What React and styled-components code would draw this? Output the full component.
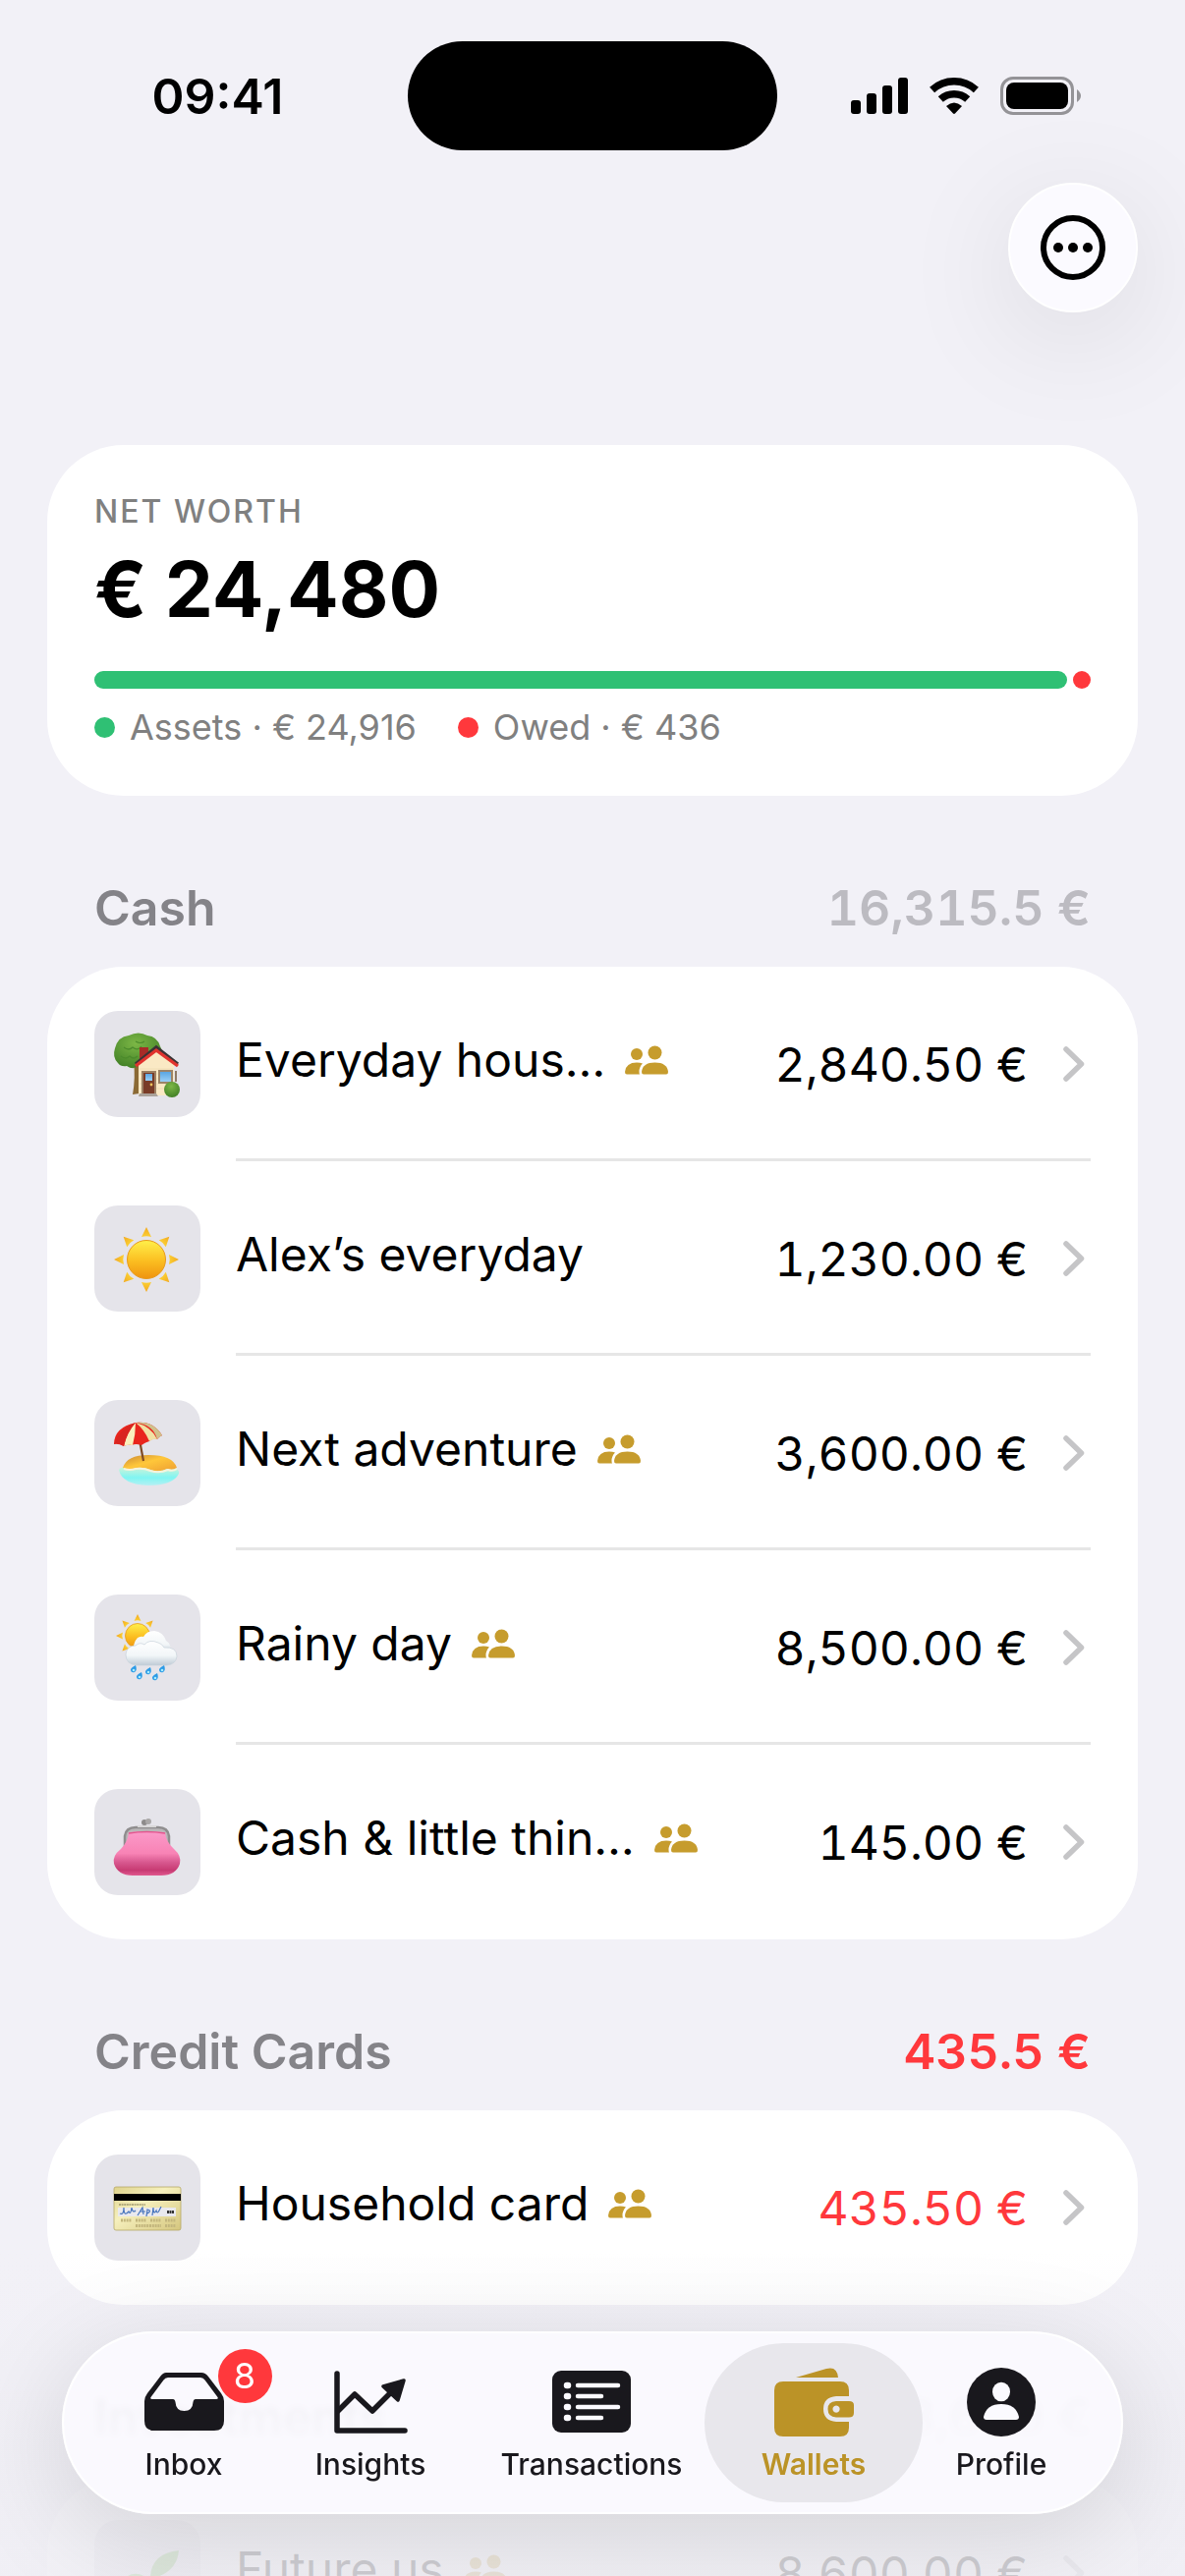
import React from 'react'
import { styled, createGlobalStyle } from 'styled-components'

const GlobalStyle = createGlobalStyle`
  *, *::before, *::after { box-sizing: border-box; }
  body {
    margin: 0;
    background: #f2f1f7;
    color: #000;
    font-family: Inter, "Liberation Sans", sans-serif;
  }
  h1, h2, p, ul { margin: 0; padding: 0; }
  ul { list-style: none; }
  a { color: inherit; text-decoration: none; }
  svg { display: block; flex: none; }
`

/* ---------- data ---------- */

const sections = [
  {
    title: "Cash",
    total: "16,315.5 €",
    wallets: [
      { icon: "house", name: "Everyday hous…", amount: "2,840.50 €", shared: true },
      { icon: "sun", name: "Alex’s everyday", amount: "1,230.00 €" },
      { icon: "beach", name: "Next adventure", amount: "3,600.00 €", shared: true },
      { icon: "rain", name: "Rainy day", amount: "8,500.00 €", shared: true },
      { icon: "purse", name: "Cash & little thin…", amount: "145.00 €", shared: true }
    ]
  },
  {
    title: "Credit Cards",
    total: "435.5 €",
    debt: true,
    wallets: [
      { icon: "card", name: "Household card", amount: "435.50 €", shared: true }
    ]
  },
  {
    title: "Investments",
    total: "8,600 €",
    wallets: [
      { icon: "plant", name: "Future us", amount: "8,600.00 €", shared: true }
    ]
  }
]

/* ---------- wallet pictures ---------- */

const House = () => (
  <svg viewBox="0 0 108 108" width="108" height="108" aria-hidden="true">
    <defs>
      <radialGradient id="leaf" cx="45%" cy="30%" r="75%">
        <stop offset="0" stopColor="#7cb746" />
        <stop offset="1" stopColor="#3e7d24" />
      </radialGradient>
      <linearGradient id="pane" x1="0" y1="0" x2="0" y2="1">
        <stop offset="0" stopColor="#5aa5e2" />
        <stop offset="1" stopColor="#9bd0f6" />
      </linearGradient>
    </defs>
    <path d="M40 52 L48 52 L46 84 L39 85 Q42 68 40 52Z" fill="#8b6a35" />
    <path d="M24 53 Q18 47 21 38 Q24 26 35 25 Q45 20 54 25 Q64 26 67 36 Q71 42 66 50 Q58 59 46 55 Q40 61 33 56 Q27 57 24 53Z" fill="url(#leaf)" />
    <path d="M30 37 q5 4 9 0 q5 4 9 -1 M27 46 q5 4 9 0 q4 4 8 0 M42 31 q5 3 9 0" fill="none" stroke="#4c8b2c" strokeWidth="1.2" />
    <path d="M46 37 h9 v8 l-9 8z" fill="#a82c27" />
    <path d="M45 54 L63 39 L81 54 V86 H45Z" fill="#fae9c4" />
    <path d="M46 59H80M46 64H80M46 69H80M46 74H80M46 79H80" stroke="#eedbb3" strokeWidth="0.8" />
    <path d="M42 54 L63 37 L85 54" fill="none" stroke="#3b3334" strokeWidth="3.4" />
    <path d="M42 56 L63 40 L85 56" fill="none" stroke="#e1332e" strokeWidth="3.4" />
    <rect x="48" y="61" width="15" height="25" fill="#9c8063" />
    <rect x="50" y="63" width="11" height="22" fill="#793c27" />
    <rect x="52" y="64" width="7" height="7" fill="url(#pane)" />
    <circle cx="58" cy="75" r="1.4" fill="#eec25b" />
    <rect x="65" y="60" width="15" height="14" fill="#9c8468" />
    <rect x="67" y="62" width="11" height="10" fill="url(#pane)" />
    <path d="M83 61v11" stroke="#8e7b67" strokeWidth="2" />
    <path d="M46 84 h17 l2 3 H45z" fill="#aaa29a" />
    <circle cx="79" cy="80" r="8" fill="url(#leaf)" />
  </svg>
)

const SunRays = ({ cx, cy, inner, outer, half, skip = [] }) => (
  <g fill="url(#ray)">
    {[0, 45, 90, 135, 180, 225, 270, 315]
      .filter((angle) => !skip.includes(angle))
      .map((angle) => (
        <path
          key={angle}
          d={`M${cx} ${cy - outer} L${cx + half} ${cy - inner} Q${cx} ${cy - inner - 1.5} ${cx - half} ${cy - inner}Z`}
          transform={`rotate(${angle} ${cx} ${cy})`}
        />
      ))}
  </g>
)

const SunDefs = () => (
  <defs>
    <linearGradient id="ray" x1="0" y1="0" x2="0" y2="1">
      <stop offset="0" stopColor="#f2a81f" />
      <stop offset="1" stopColor="#fbcf34" />
    </linearGradient>
    <linearGradient id="disc" x1="0" y1="0" x2="0" y2="1">
      <stop offset="0" stopColor="#fff04a" />
      <stop offset="0.55" stopColor="#fbbd20" />
      <stop offset="1" stopColor="#ef9410" />
    </linearGradient>
  </defs>
)

const Sun = () => (
  <svg viewBox="0 0 108 108" width="108" height="108" aria-hidden="true">
    <SunDefs />
    <SunRays cx={53} cy={55} inner={23} outer={33} half={5} />
    <circle cx="53" cy="55" r="19.5" fill="url(#disc)" stroke="#e89a1c" strokeWidth="1" />
  </svg>
)

const Beach = () => (
  <svg viewBox="0 0 108 108" width="108" height="108" aria-hidden="true">
    <defs>
      <linearGradient id="sea" x1="0" y1="0" x2="0" y2="1">
        <stop offset="0" stopColor="#d9f3d4" />
        <stop offset="0.6" stopColor="#7ff5f2" />
        <stop offset="1" stopColor="#b5f0f3" />
      </linearGradient>
      <linearGradient id="sand" x1="0" y1="0" x2="1" y2="1">
        <stop offset="0" stopColor="#c98735" />
        <stop offset="0.45" stopColor="#ffc73a" />
        <stop offset="1" stopColor="#ee9f33" />
      </linearGradient>
    </defs>
    <path d="M25 71 Q28 67 36 67 H78 Q87 70 86 75 Q80 87 55 87 Q28 86 25 71Z" fill="url(#sea)" />
    <path d="M29 69 Q33 56 55 56 Q80 56 84 69 Q80 72 74 70 Q66 74 57 71 Q48 67 40 70 Q34 71 29 69Z" fill="url(#sand)" />
    <path d="M30 70 Q36 72 42 70 Q50 69 57 72 Q66 75 75 71 Q80 73 84 70" fill="none" stroke="#f6f3dd" strokeWidth="2" />
    <path d="M43 25 L50 62" stroke="#7f4a24" strokeWidth="2.2" />
    <path d="M20 45 Q20 28 42 23 Q60 21 69 36 Q66 37 64 40 Q60 38 56 42 Q52 43 48 46 Q42 44 38 46 Q34 45 30 47 Q24 44 20 45Z" fill="#e9251d" />
    <path d="M42 23 Q33 33 30 47 Q34 45 39 46 Q42 35 42 23Z" fill="#faf0bd" />
    <path d="M42 23 Q51 30 56 42 Q60 39 64 40 Q58 27 42 23Z" fill="#f1e1a4" />
    <path d="M42 23 Q26 29 20 45 Q24 43 30 47 Q33 33 42 23Z" fill="#d92620" />
    <path d="M42 23 Q60 25 64 40 Q66 37 69 36 Q60 21 42 23Z" fill="#cfc28c" />
  </svg>
)

const Rain = () => (
  <svg viewBox="0 0 108 108" width="108" height="108" aria-hidden="true">
    <SunDefs />
    <defs>
      <linearGradient id="cloud" x1="0" y1="0" x2="0" y2="1">
        <stop offset="0" stopColor="#ffffff" />
        <stop offset="0.6" stopColor="#f2f6f8" />
        <stop offset="1" stopColor="#bfcbd6" />
      </linearGradient>
    </defs>
    <SunRays cx={44} cy={42} inner={15} outer={22} half={3.5} skip={[90, 135, 180]} />
    <circle cx="44" cy="42" r="12.5" fill="url(#disc)" stroke="#e89a1c" strokeWidth="0.8" />
    <path d="M41 60 Q38 50 44 44 Q48 42 50 43 Q53 37 61 37 Q70 38 73 47 Q79 50 77 60Z" fill="url(#cloud)" />
    <path d="M43 72 Q32 71 32 61 Q33 52 42 52 Q46 48 51 51 Q56 45 65 49 Q69 50 71 54 Q84 53 84 63 Q83 71 74 72Z" fill="url(#cloud)" stroke="#c9d3db" strokeWidth="0.7" />
    {[[40, 76], [55, 78], [69, 76], [46, 83], [62, 84]].map(([x, y]) => (
      <g key={x}>
        <path d={`M${x + 2} ${y - 4} Q${x + 4} ${y + 1} ${x + 1} ${y + 3} Q${x - 3} ${y + 4} ${x - 3} ${y} Q${x - 2} ${y - 2} ${x + 2} ${y - 4}Z`} fill="#2c9be6" />
        <circle cx={x} cy={y + 1} r="1.3" fill="#a6ecff" />
      </g>
    ))}
  </svg>
)

const Purse = () => (
  <svg viewBox="0 0 108 108" width="108" height="108" aria-hidden="true">
    <defs>
      <linearGradient id="pink" x1="0" y1="0" x2="0" y2="1">
        <stop offset="0" stopColor="#fb9ac9" />
        <stop offset="0.5" stopColor="#f883b5" />
        <stop offset="0.7" stopColor="#d8588f" />
        <stop offset="0.88" stopColor="#c73a73" />
        <stop offset="1" stopColor="#e0598f" />
      </linearGradient>
    </defs>
    <circle cx="51" cy="34" r="3" fill="#8d8b8b" />
    <circle cx="55" cy="33" r="3" fill="#a9a7a7" />
    <path d="M31 60 V48 Q32 39 42 39 H65 Q75 39 76 48 V60" fill="#b9b7b8" stroke="#8f8d8e" strokeWidth="2.5" />
    <path d="M44 38 h19" stroke="#d8d7d8" strokeWidth="2" />
    <path d="M35 44 Q53 42 72 44 Q73 54 81 61 Q89 68 87 76 Q83 88 68 88 H39 Q24 88 20 76 Q18 68 27 61 Q34 54 35 44Z" fill="url(#pink)" />
    <path d="M35 45 Q53 42 72 45" fill="none" stroke="#e2568e" strokeWidth="1.5" />
  </svg>
)

const CreditCard = () => (
  <svg viewBox="0 0 108 108" width="108" height="108" aria-hidden="true">
    <defs>
      <linearGradient id="gold" x1="0" y1="0" x2="1" y2="1">
        <stop offset="0" stopColor="#ded28c" />
        <stop offset="0.4" stopColor="#f6f0bd" />
        <stop offset="1" stopColor="#d5c67e" />
      </linearGradient>
    </defs>
    <rect x="20" y="33" width="68" height="44" rx="2" fill="url(#gold)" stroke="#b5a768" strokeWidth="0.8" />
    <rect x="20" y="40" width="68" height="7" fill="#000" />
    <rect x="24" y="54" width="59" height="9" fill="#e9e9ee" />
    <path d="M25 51 h27" stroke="#77704a" strokeWidth="1.2" strokeDasharray="2 0.6" />
    <path d="M26 60 q4 2 4 -6 q0 10 5 4 q2 4 3 -4 q1 6 4 3 M44 62 l5 -8 l1 7 m-4 -3 h6 m1 5 l1 -7 q5 1 0 4 m5 2 l1 -8 q0 8 3 3 q1 4 3 0 l2 -4" fill="none" stroke="#4674bd" strokeWidth="1.2" />
    <path d="M74 58.5 h7" stroke="#333" strokeWidth="3" strokeDasharray="2 0.5" />
    <path d="M27 67 h11 m4 0 h11 m4 0 h11 m4 0 h11 M42 72.5 h26 m4 0 h11" stroke="#c3b67d" strokeWidth="3" strokeDasharray="2 0.8" />
  </svg>
)

const Plant = () => (
  <svg viewBox="0 0 108 108" width="108" height="108" aria-hidden="true">
    <path d="M54 90 Q58 72 56 60" fill="none" stroke="#58a338" strokeWidth="4" />
    <path d="M57 60 Q57 34 86 31 Q84 54 57 60Z" fill="#65b53e" />
    <path d="M57 62 Q38 44 22 70 Q42 80 57 62Z" fill="#76c54b" />
  </svg>
)

const pictures = {
  house: House,
  sun: Sun,
  beach: Beach,
  rain: Rain,
  purse: Purse,
  card: CreditCard,
  plant: Plant
}

/* ---------- glyphs ---------- */

const SignalIcon = () => (
  <svg viewBox="0 0 58 37" width="58" height="37" aria-hidden="true">
    <rect x="0" y="23" width="10" height="14" rx="3" />
    <rect x="16" y="16" width="10" height="21" rx="3" />
    <rect x="32" y="8" width="10" height="29" rx="3" />
    <rect x="48" y="0" width="10" height="37" rx="3" />
  </svg>
)

const WifiIcon = () => (
  <svg viewBox="0 0 50 37" width="50" height="37" aria-hidden="true">
    <path d="M2.6 12.5 A33.2 33.2 0 0 1 47.4 12.5" fill="none" stroke="#000" strokeWidth="7.5" />
    <path d="M11.3 22 A20.3 20.3 0 0 1 38.7 22" fill="none" stroke="#000" strokeWidth="7.5" />
    <path d="M17 29 Q25 22 33 29 L26 36.5 Q25 37.4 24 36.5Z" />
  </svg>
)

const BatteryIcon = () => (
  <svg viewBox="0 0 83 40" width="83" height="40" aria-hidden="true">
    <rect x="1.5" y="1.5" width="72" height="36" rx="11.5" fill="none" stroke="#949397" strokeWidth="3" />
    <rect x="6" y="6" width="63" height="27" rx="8" />
    <path d="M78 13 Q82 16 82 19.5 Q82 23 78 26Z" fill="#949397" />
  </svg>
)

const MoreIcon = () => (
  <svg viewBox="0 0 66 66" width="66" height="66" aria-hidden="true">
    <circle cx="33" cy="33" r="30" fill="none" stroke="#000" strokeWidth="6" />
    <circle cx="18" cy="33" r="5" />
    <circle cx="33" cy="33" r="5" />
    <circle cx="48" cy="33" r="5" />
  </svg>
)

const PeopleIcon = () => (
  <svg viewBox="0 0 44 30" width="44" height="30" fill="#c69c2d" aria-label="Shared" role="img">
    <circle cx="12" cy="9" r="6" />
    <circle cx="30.5" cy="7.5" r="7" />
    <path d="M0 27 Q1 17.5 12 17.5 Q15.5 17.5 18 18.6 Q14.5 22 14.5 27 Q14.5 28.5 15 29.5 H2 Q0 29.5 0 27Z" />
    <path d="M17 27 Q18 17.5 30.5 17.5 Q43 17.5 44 27 Q44 29.5 42 29.5 H19 Q17 29.5 17 27Z" />
  </svg>
)

const Chevron = () => (
  <svg viewBox="0 0 22 36" width="22" height="36" aria-hidden="true">
    <path d="M3 3 L18.5 18 L3 33" fill="none" stroke="#c5c5c7" strokeWidth="5.5" strokeLinecap="round" strokeLinejoin="round" />
  </svg>
)

const InboxIcon = () => (
  <svg viewBox="0 0 81 60" width="81" height="60" fill="currentColor" aria-hidden="true">
    <path fillRule="evenodd" d="M22 0 H58 Q62 0 65 4 L78 21 Q81 25 81 29 V49 Q81 59 71 59 H10 Q0 59 0 49 V29 Q0 25 3 21 L16 4 Q19 0 22 0Z M24 5 Q21 5 19.5 7.5 L6.5 25 Q5.5 27 8 27 H29 Q31 27 31.5 30 Q32 39 40.5 39 Q49 39 49.5 30 Q50 27 52 27 H73 Q75.5 27 74.5 25 L61.5 7.5 Q60 5 57 5Z" />
  </svg>
)

const InsightsIcon = () => (
  <svg viewBox="0 0 75 64" width="75" height="64" fill="none" stroke="currentColor" strokeWidth="5.5" strokeLinecap="round" strokeLinejoin="round" aria-hidden="true">
    <path d="M3 3 V61 H72" />
    <path d="M4 41 L21 24 L39 41 L60 20" />
    <path d="M71 10 L50 16 L65 30Z" fill="currentColor" strokeWidth="3.5" />
  </svg>
)

const TransactionsIcon = () => (
  <svg viewBox="0 0 80 64" width="80" height="64" aria-hidden="true">
    <rect width="80" height="63" rx="9" fill="currentColor" />
    <g stroke="#fbfaff" strokeWidth="4.5" strokeLinecap="round">
      <path d="M26 15 H67 M26 26 H50 M26 37 H67 M26 48 H50" />
      <path d="M15 15 h1 M15 26 h1 M15 37 h1 M15 48 h1" strokeWidth="6.5" />
    </g>
  </svg>
)

const WalletIcon = () => (
  <svg viewBox="0 0 81 70" width="81" height="70" fill="currentColor" aria-hidden="true">
    <path d="M22 10 L53 1 Q64 -2 65 10Z" />
    <path d="M9 14 H67 Q76 14 76 23 V29 H63 Q50 30 50 42 Q50 54 63 55 H76 V61 Q76 70 67 70 H9 Q0 70 0 61 V23 Q0 14 9 14Z" />
    <path fillRule="evenodd" d="M63 34 H76 Q81 34 81 38 V46 Q81 50.5 76 50.5 H63 Q54.5 50 54.5 42 Q54.5 34.5 63 34Z M63 38.5 a3.6 3.6 0 1 0 0.1 0Z" />
  </svg>
)

const ProfileIcon = () => (
  <svg viewBox="0 0 70 70" width="70" height="70" aria-hidden="true">
    <circle cx="35" cy="35" r="35" fill="currentColor" />
    <ellipse cx="35" cy="24.5" rx="9" ry="9.8" fill="#fbfaff" />
    <path d="M17 50 Q20 37 35 37 Q50 37 53 50 Q53 53 50 53 H20 Q17 53 17 50Z" fill="#fbfaff" />
  </svg>
)

const tabs = [
  { label: "Inbox", Icon: InboxIcon, badge: 8 },
  { label: "Insights", Icon: InsightsIcon },
  { label: "Transactions", Icon: TransactionsIcon },
  { label: "Wallets", Icon: WalletIcon, active: true },
  { label: "Profile", Icon: ProfileIcon }
]

export default function WalletsPage() {
  return (
    <Screen>
      <GlobalStyle />
      <StatusBar>
        <Clock>09:41</Clock>
        <Island />
        <StatusIcons>
          <SignalIcon />
          <WifiIcon />
          <BatteryIcon />
        </StatusIcons>
      </StatusBar>

      <Toolbar>
        <MoreButton type="button" aria-label="More">
          <MoreIcon />
        </MoreButton>
      </Toolbar>

      <Content>
        <NetWorthCard>
          <NetWorthLabel>NET WORTH</NetWorthLabel>
          <NetWorthAmount>€ 24,480</NetWorthAmount>
          <Bar>
            <BarPart $grow={24916 - 436} $color="#2fc074" />
            <BarPart $grow={436} $color="#ff383c" />
          </Bar>
          <Legend>
            <LegendItem><Dot $color="#2fc074" />Assets · € 24,916</LegendItem>
            <LegendItem><Dot $color="#ff383c" />Owed · € 436</LegendItem>
          </Legend>
        </NetWorthCard>

        {sections.map((section) => (
          <section key={section.title}>
            <SectionHeader>
              <SectionTitle>{section.title}</SectionTitle>
              <SectionTotal $debt={section.debt}>{section.total}</SectionTotal>
            </SectionHeader>
            <WalletList>
              {section.wallets.map((wallet) => {
                const Picture = pictures[wallet.icon]
                return (
                  <li key={wallet.name}>
                    <WalletRow href="#">
                      <Tile><Picture /></Tile>
                      <RowBody>
                        <WalletName>
                          {wallet.name}
                          {wallet.shared && <PeopleIcon />}
                        </WalletName>
                        <Amount $debt={section.debt}>{wallet.amount}</Amount>
                        <Chevron />
                      </RowBody>
                    </WalletRow>
                  </li>
                )
              })}
            </WalletList>
          </section>
        ))}
      </Content>

      <BottomFade />
      <TabBar>
        {tabs.map(({ label, Icon, badge, active }) => (
          <Tab key={label} href="#" $active={active} aria-current={active ? "page" : undefined}>
            <IconSlot>
              <Icon />
              {badge && <Badge>{badge}</Badge>}
            </IconSlot>
            {label}
          </Tab>
        ))}
      </TabBar>
    </Screen>
  )
}

/* ---------- styles ---------- */

const Screen = styled.main`
  position: relative;
  height: 100vh;
  overflow: hidden;
`;

const StatusBar = styled.header`
  display: grid;
  grid-template-columns: 1fr 376px 1fr;
  align-items: center;
  padding-top: 42px;
`;

const Clock = styled.span`
  padding-left: 28px;
  text-align: center;
  font-size: 50px;
  line-height: 60px;
  font-weight: 600;
`;

const Island = styled.div`
  height: 111px;
  border-radius: 56px;
  background: #000;
`;

const StatusIcons = styled.div`
  display: flex;
  justify-content: center;
  align-items: center;
  gap: 22px;
  padding-right: 31px;
`;

const Toolbar = styled.div`
  display: flex;
  justify-content: flex-end;
  padding: 33px 48px 0;
`;

const MoreButton = styled.button`
  display: flex;
  align-items: center;
  justify-content: center;
  width: 132px;
  height: 132px;
  padding: 0;
  border: 2px solid #fff;
  border-radius: 50%;
  background: #fbfaff;
  box-shadow: 0 24px 120px rgba(0, 0, 0, 0.1);
`;

const Content = styled.div`
  padding: 135px 48px 0;
`;

const NetWorthCard = styled.section`
  padding: 50px 48px 48px;
  border-radius: 78px;
  background: #fff;
`;

const NetWorthLabel = styled.h2`
  color: #808080;
  font-size: 32px;
  line-height: 36px;
  font-weight: 500;
  letter-spacing: 2px;
`;

const NetWorthAmount = styled.p`
  margin-top: 16px;
  font-size: 78px;
  line-height: 90px;
  font-weight: 700;
`;

const Bar = styled.div`
  display: flex;
  gap: 6px;
  margin-top: 38px;
`;

const BarPart = styled.div`
  flex: ${({ $grow }) => $grow} 1 0;
  height: 18px;
  border-radius: 9px;
  background: ${({ $color }) => $color};
`;

const Legend = styled.div`
  display: flex;
  gap: 42px;
  margin-top: 17px;
`;

const LegendItem = styled.span`
  display: flex;
  align-items: center;
  gap: 15px;
  color: #808080;
  font-size: 36px;
  line-height: 44px;
`;

const Dot = styled.i`
  width: 21px;
  height: 21px;
  border-radius: 50%;
  background: ${({ $color }) => $color};
`;

const SectionHeader = styled.div`
  display: flex;
  justify-content: space-between;
  padding: 84px 48px 30px;
  font-size: 50px;
  line-height: 60px;
`;

const SectionTitle = styled.h2`
  color: #848388;
  font-size: inherit;
  font-weight: 600;
`;

const SectionTotal = styled.span`
  color: ${({ $debt }) => ($debt ? "#ff383c" : "#bcbbc1")};
  font-weight: 600;
  font-variant-numeric: tabular-nums;
`;

const WalletList = styled.ul`
  border-radius: 78px;
  background: #fff;
`;

const WalletRow = styled.a`
  display: flex;
  align-items: center;
  gap: 36px;
  padding: 0 48px;
`;

const Tile = styled.span`
  flex: none;
  width: 108px;
  height: 108px;
  border-radius: 24px;
  background: #e5e4ea;
`;

const RowBody = styled.span`
  display: flex;
  flex: 1;
  align-items: center;
  height: 198px;
  padding-right: 6px;
  font-size: 48px;
  line-height: 60px;

  li:not(:last-child) & {
    box-shadow: inset 0 -3px #e6e6e6;
  }
`;

const WalletName = styled.span`
  display: flex;
  flex: 1;
  align-items: center;
  gap: 20px;
  padding-bottom: 8px;
  white-space: nowrap;
`;

const Amount = styled.span`
  margin-right: 36px;
  padding-top: 2px;
  color: ${({ $debt }) => ($debt ? "#ff383c" : "#000")};
  font-variant-numeric: tabular-nums;
`;

const BottomFade = styled.div`
  position: absolute;
  right: 0;
  bottom: 0;
  left: 0;
  height: 330px;
  background: linear-gradient(
    rgba(240, 239, 245, 0) 0,
    rgba(240, 239, 245, 0.12) 50px,
    rgba(240, 239, 245, 0.86) 200px,
    rgba(240, 239, 245, 0.86) 100%
  );
`;

const TabBar = styled.nav`
  position: absolute;
  right: 63px;
  bottom: 63px;
  left: 63px;
  display: grid;
  grid-template-columns: 190fr 190fr 260fr 192fr 190fr;
  padding: 10px 27px;
  border: 2px solid #fff;
  border-radius: 93px;
  background: rgba(251, 250, 255, 0.84);
  backdrop-filter: blur(3px);
  box-shadow: 0 24px 110px rgba(0, 0, 0, 0.13);
`;

const Tab = styled.a`
  display: flex;
  flex-direction: column;
  align-items: center;
  gap: 8px;
  height: 162px;
  margin: 0 ${({ $active }) => ($active ? "-15px" : "0")};
  padding-top: 23px;
  border-radius: 81px;
  background: ${({ $active }) => ($active ? "#e8e7ec" : "none")};
  color: ${({ $active }) => ($active ? "#bb9327" : "#19181d")};
  font-size: 30px;
  line-height: 36px;
  font-weight: ${({ $active }) => ($active ? 600 : 500)};
`;

const IconSlot = styled.span`
  position: relative;
  display: flex;
  align-items: center;
  height: 74px;
`;

const Badge = styled.span`
  position: absolute;
  top: -17px;
  left: 75px;
  width: 55px;
  height: 55px;
  border-radius: 50%;
  background: #ff383c;
  color: #fff;
  font-size: 36px;
  line-height: 55px;
  font-weight: 400;
  text-align: center;
`;
